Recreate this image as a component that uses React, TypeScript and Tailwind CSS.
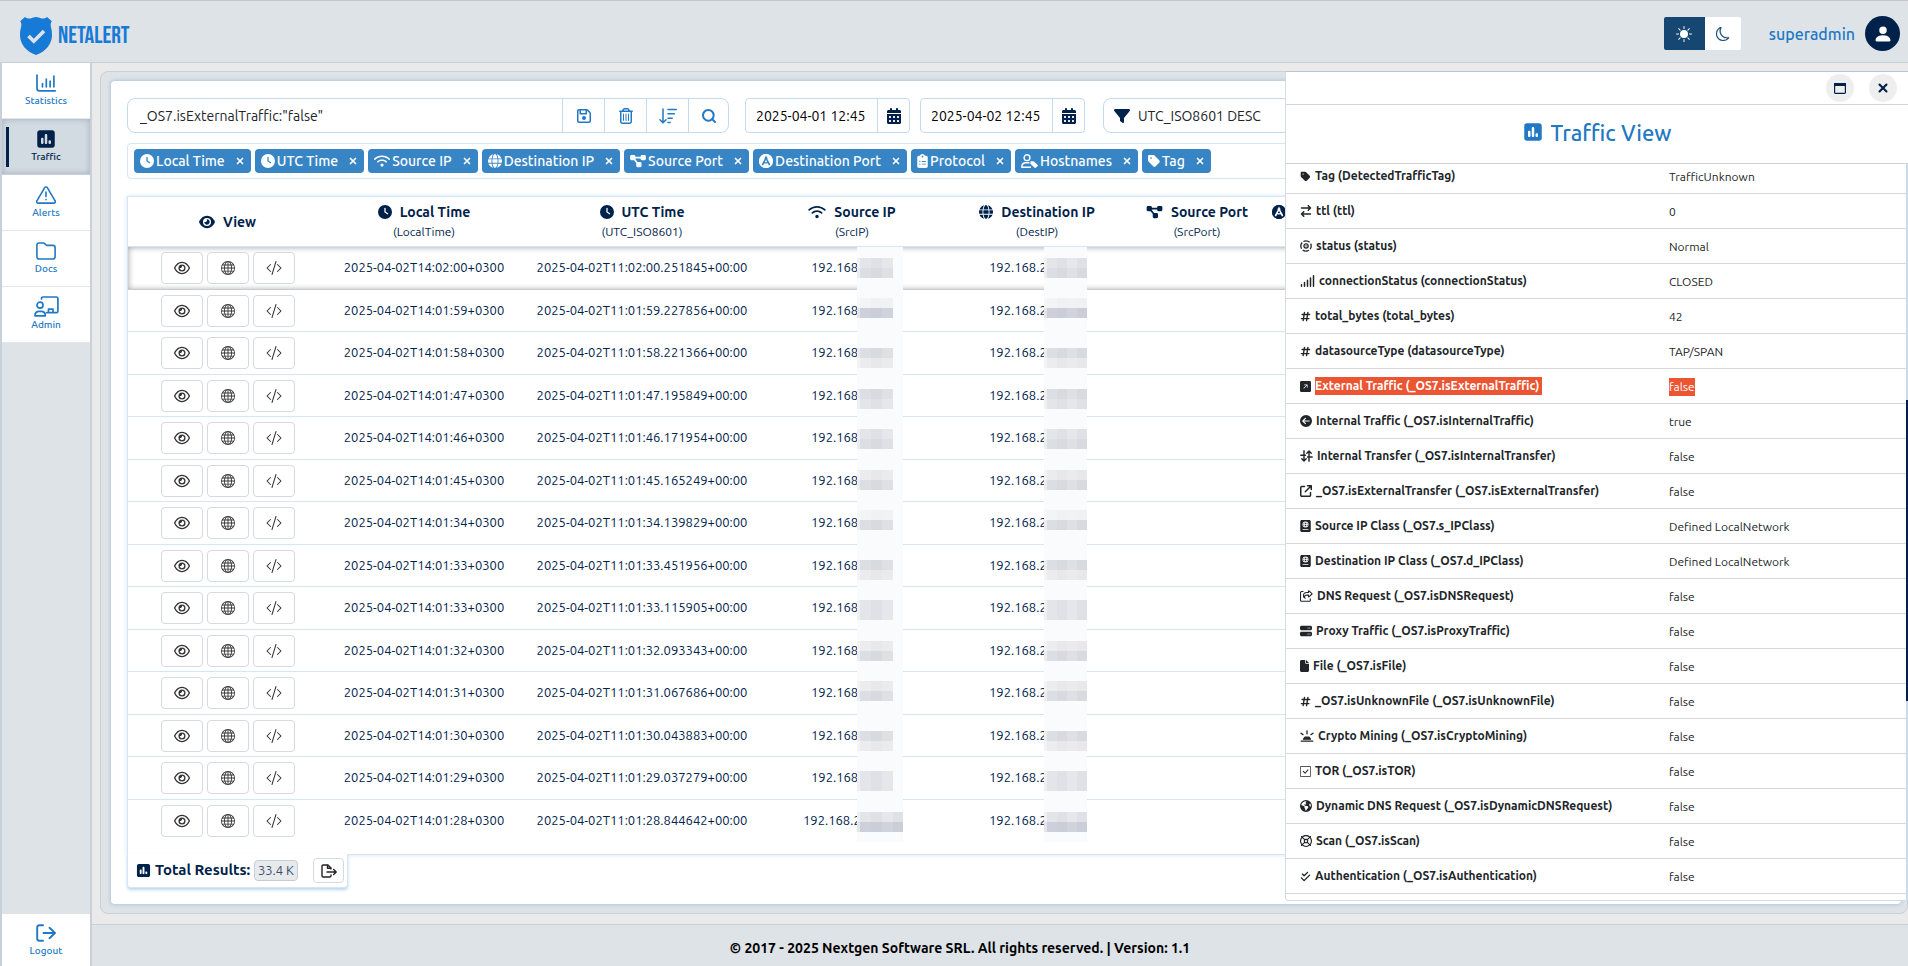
import type { ReactNode } from "react";
import { BsArrowUpRightSquareFill, BsCheckSquare, BsCodeSlash, BsGlobe, BsMoon, BsPersonFill, BsSunFill } from "react-icons/bs";
import {
  FaArrowRightArrowLeft, FaArrowUpRightFromSquare, FaCalendarDays, FaCheckDouble, FaCircleArrowLeft,
  FaClipboardList, FaClock, FaDiagramProject, FaEarthAmericas, FaEye, FaFile, FaFilter, FaGlobe, FaHashtag,
  FaPassport, FaRegEye, FaRegFloppyDisk, FaRegLifeRing, FaRegShareFromSquare, FaRegTrashCan, FaServer,
  FaSignal, FaSquarePollVertical, FaTag, FaWifi,
} from "react-icons/fa6";
import { Search, X } from "lucide-react";

const Line = ({ box, className, children, width = 1.8 }: { box: string; className: string; children: ReactNode; width?: number }) => (
  <svg viewBox={box} className={className} fill="none" stroke="currentColor" strokeWidth={width} strokeLinecap="round" strokeLinejoin="round" aria-hidden="true">
    {children}
  </svg>
);

const Shield = () => (
  <svg viewBox="0 0 32 38" className="h-[38px] w-8" aria-hidden="true">
    <path fill="#177ad6" d="M5 0C7 1.6 9.3 1.9 11.3 1.2 12.7.7 13.9.3 16 0c2.1.3 3.3.7 4.7 1.2C22.7 1.9 25 1.6 27 0l4.7 4c-1.5 2.6-1.2 4.9-.4 7.5.5 1.9.7 4 .7 7.5C31.6 27 26 34.5 16 38 6 34.5.4 27 0 19c0-3.5.2-5.6.7-7.5.8-2.6 1.1-4.9-.4-7.5Z" />
    <path fill="none" stroke="#dee3e7" strokeWidth="3.6" d="m8.5 19 5.3 5.2L24 14" />
  </svg>
);
const ChartIcon = () => (
  <Line box="0 0 20 18" className="h-[18px] w-5" width={1.7}>
    <path d="M1 1v13.5A2.3 2.3 0 0 0 3.3 16.8H19.2M6.5 9.5v3.3M10.3 5v7.8M14.1 7.2v5.6M17.9 2.2v10.6" />
  </Line>
);
const AlertIcon = () => (
  <Line box="0 0 20 18" className="h-[18px] w-5" width={1.6}>
    <path d="M8.7 1.7.9 14.8a1.5 1.5 0 0 0 1.3 2.3h15.6a1.5 1.5 0 0 0 1.3-2.3L11.3 1.7a1.5 1.5 0 0 0-2.6 0ZM10 6v4.6M10 13.5v.2" />
  </Line>
);
const FolderIcon = () => (
  <Line box="0 0 20 18" className="h-[18px] w-5" width={1.6}>
    <path d="M3 1h4.3c.6 0 1 .2 1.4.6l1.2 1.2c.4.4.8.6 1.4.6H17A2.1 2.1 0 0 1 19.1 5.5v9.4A2.1 2.1 0 0 1 17 17H3A2.1 2.1 0 0 1 .9 14.9V3.1A2.1 2.1 0 0 1 3 1Z" />
  </Line>
);
const AdminIcon = () => (
  <Line box="0 0 25 21" className="h-[21px] w-[25px]" width={1.7}>
    <circle cx="6" cy="9.2" r="3" />
    <path d="M1 19.8c0-3 1.8-4.5 4.2-4.5h1.9c2.4 0 4.2 1.5 4.2 4.5ZM7.5 3V2.4C7.5 1.6 8.1 1 8.9 1h13.5c.8 0 1.5.6 1.5 1.4v12.8c0 .8-.7 1.4-1.5 1.4H12.5M14.5 16.4v-3.2h4.5v3.2" />
  </Line>
);
const LogoutIcon = () => (
  <Line box="0 0 20 18" className="h-[18px] w-5" width={1.9}>
    <path d="M7 1.2H3.5A2.3 2.3 0 0 0 1.2 3.5v11a2.3 2.3 0 0 0 2.3 2.3H7M7.5 9h11.3M13.5 3.8 19 9l-5.5 5.2" />
  </Line>
);
const SortIcon = () => (
  <Line box="0 0 18 16" className="h-4 w-[18px]" width={1.5}>
    <path d="M4 1v13.5M1 11.7l3 3.1 3-3.1M9 1.5h8.3M9 5.8h6.3M9 10.2h4.2M9 14.5h2" />
  </Line>
);
const ExportIcon = () => (
  <Line box="0 0 16 14" className="h-[14px] w-4" width={1.4}>
    <path d="M10 5V4L7 1H2.2C1.5 1 1 1.5 1 2.2v9.6c0 .7.5 1.2 1.2 1.2h6.6c.7 0 1.2-.5 1.2-1.2v-.8M6.5 1v3.3H10M6 8h9M12.7 5.5 15.2 8l-2.5 2.5" />
  </Line>
);
const WindowIcon = () => (
  <svg viewBox="0 0 12 11" className="h-[11px] w-3" aria-hidden="true">
    <rect x=".6" y=".6" width="10.8" height="9.8" rx=".8" fill="none" stroke="currentColor" strokeWidth="1.2" />
    <path fill="currentColor" d="M0 0h12v3H0z" />
  </svg>
);
const CompassIcon = () => (
  <svg viewBox="0 0 16 16" className="size-[1em]" aria-hidden="true">
    <circle cx="8" cy="8" r="7.3" fill="none" stroke="currentColor" strokeWidth="1.4" />
    <path fill="currentColor" fillRule="evenodd" d="M8 0a8 8 0 1 1 0 16A8 8 0 0 1 8 0ZM7.4 2v1.3a1.7 1.7 0 0 0-.9 2.4L3 12l.3 1.8 1.5-1 1.3-2.3c1.2.4 2.6.4 3.8 0l1.3 2.3 1.5 1L13 12 9.5 5.7a1.7 1.7 0 0 0-.9-2.4V2Zm.6 4.6 1.3 2.5c-.8.3-1.8.3-2.6 0Z" />
  </svg>
);
const UserTagIcon = () => (
  <svg viewBox="0 0 17 14" className="h-[14px] w-[17px]" aria-hidden="true">
    <g fill="none" stroke="currentColor" strokeWidth="1.4" strokeLinejoin="round">
      <circle cx="6" cy="3.7" r="2.9" />
      <path d="M8.5 8.8H4.8C2.3 8.8.8 10.5.8 13.2H10" />
    </g>
    <path fill="currentColor" d="M9.5 7.3h3.2l4 3.6c.3.3.3.7 0 1l-2 1.9c-.3.3-.7.3-1 0l-4.2-3.9Z" />
  </svg>
);
const StatusIcon = () => (
  <Line box="0 0 12 12" className="size-3" width={1.3}>
    <circle cx="6" cy="6" r="5.2" strokeDasharray="6.6 1.568" strokeDashoffset="3.3" strokeLinecap="butt" />
    <circle cx="6" cy="6" r="2.1" />
    <path d="M6 6v.1" />
  </Line>
);
const TransferIcon = () => (
  <Line box="0 0 13 12" className="h-3 w-[13px]" width={1.4}>
    <path d="M4 .8v10M1.8 8.8 4 11l2.2-2.2M9 11.2v-10M6.8 3.2 9 1l2.2 2.2M.8 5.2h4.7M7.5 7h4.7" />
  </Line>
);
const MiningIcon = () => (
  <Line box="0 0 14 12" className="h-3 w-3.5" width={1.3}>
    <path d="M7 .8v3M1 3.2l2 1.4M13 3.2l-2 1.4M1.2 11.2h11.6" />
    <path fill="currentColor" d="M3.5 9.2 5 7.2h4l1.5 2Z" />
  </Line>
);

const NAV = [
  { label: "Statistics", icon: <ChartIcon /> },
  { label: "Traffic", icon: <FaSquarePollVertical className="size-5" />, active: true },
  { label: "Alerts", icon: <AlertIcon /> },
  { label: "Docs", icon: <FolderIcon /> },
  { label: "Admin", icon: <AdminIcon /> },
];

const CHIPS = [
  { label: "Local Time", icon: <FaClock /> },
  { label: "UTC Time", icon: <FaClock /> },
  { label: "Source IP", icon: <FaWifi className="w-4" /> },
  { label: "Destination IP", icon: <FaGlobe /> },
  { label: "Source Port", icon: <FaDiagramProject className="w-4" /> },
  { label: "Destination Port", icon: <CompassIcon /> },
  { label: "Protocol", icon: <FaClipboardList className="w-[11px]" /> },
  { label: "Hostnames", icon: <UserTagIcon /> },
  { label: "Tag", icon: <FaTag className="w-3" /> },
];

const COLUMNS = [
  { label: "Local Time", field: "LocalTime", icon: <FaClock />, width: "w-[194px]" },
  { label: "UTC Time", field: "UTC_ISO8601", icon: <FaClock />, width: "w-[242px]" },
  { label: "Source IP", field: "SrcIP", icon: <FaWifi className="w-[18px]" />, width: "w-[178px]" },
  { label: "Destination IP", field: "DestIP", icon: <FaGlobe />, width: "w-[192px]" },
  { label: "Source Port", field: "SrcPort", icon: <FaDiagramProject className="w-[17px]" />, width: "w-[128px]" },
  { label: "Destination Port", field: "DestPort", icon: <CompassIcon />, width: "w-[154px]" },
];

type Row = { local: string; utc: string; src: string; off: number; a: string[]; b: string[] };
const LIGHT = ["#ececef", "#e8e8ea", "#ebebed"];
const PALE = ["#f3f4f6", "#f0f1f3", "#f2f2f4"];
const DARK = ["#cdd0da", "#cbced8", "#d0d3dc"];
const MID = ["#dbdfe4", "#d8dae0", "#dfe0e4"];
const SOFT = ["#e3e5e9", "#e0e1e6", "#e6e7ea"];
const ROWS: Row[] = [
  { local: "14:02:00", utc: "11:02:00.251845", src: "192.168", off: 11, a: SOFT, b: MID },
  { local: "14:01:59", utc: "11:01:59.227856", src: "192.168", off: 8, a: PALE, b: DARK },
  { local: "14:01:58", utc: "11:01:58.221366", src: "192.168", off: 16, a: MID, b: LIGHT },
  { local: "14:01:47", utc: "11:01:47.195849", src: "192.168", off: 14, a: MID, b: SOFT },
  { local: "14:01:46", utc: "11:01:46.171954", src: "192.168", off: 12, a: SOFT, b: MID },
  { local: "14:01:45", utc: "11:01:45.165249", src: "192.168", off: 10, a: LIGHT, b: MID },
  { local: "14:01:34", utc: "11:01:34.139829", src: "192.168", off: 8, a: PALE, b: MID },
  { local: "14:01:33", utc: "11:01:33.451956", src: "192.168", off: 15, a: MID, b: LIGHT },
  { local: "14:01:33", utc: "11:01:33.115905", src: "192.168", off: 13, a: SOFT, b: SOFT },
  { local: "14:01:32", utc: "11:01:32.093343", src: "192.168", off: 11, a: LIGHT, b: MID },
  { local: "14:01:31", utc: "11:01:31.067686", src: "192.168", off: 9, a: LIGHT, b: MID },
  { local: "14:01:30", utc: "11:01:30.043883", src: "192.168", off: 16, a: MID, b: LIGHT },
  { local: "14:01:29", utc: "11:01:29.037279", src: "192.168", off: 14, a: SOFT, b: SOFT },
  { local: "14:01:28", utc: "11:01:28.844642", src: "192.168.2", off: 12, a: SOFT, b: DARK },
];

const Band = ({ shades, wide }: { shades: string[]; wide: boolean }) => (
  <span className="flex h-[10px]">
    <span className="w-[3px] opacity-50" style={{ backgroundColor: shades[0] }} />
    {shades.map((c) => (
      <span key={c} className="w-[10px] grow" style={{ backgroundColor: c }} />
    ))}
    <span className="w-[10px]" style={{ backgroundColor: wide ? shades[1] : "#f9fbfd" }} />
  </span>
);
const Mosaic = ({ row, wide, className }: { row: Row; wide: boolean; className: string }) => (
  <span className={`absolute -bottom-px top-0 z-10 bg-[#fafbfc] ${className}`} style={{ paddingTop: row.off }} aria-hidden="true">
    <Band shades={row.a} wide={wide} />
    <Band shades={row.b} wide={wide} />
  </span>
);

const DETAILS: { label: string; value: string; icon: ReactNode; hit?: boolean }[] = [
  { label: "Tag (DetectedTrafficTag)", value: "TrafficUnknown", icon: <FaTag className="size-[11px]" /> },
  { label: "ttl (ttl)", value: "0", icon: <FaArrowRightArrowLeft className="size-3" /> },
  { label: "status (status)", value: "Normal", icon: <StatusIcon /> },
  { label: "connectionStatus (connectionStatus)", value: "CLOSED", icon: <FaSignal className="h-3 w-[15px]" /> },
  { label: "total_bytes (total_bytes)", value: "42", icon: <FaHashtag className="size-[11px]" /> },
  { label: "datasourceType (datasourceType)", value: "TAP/SPAN", icon: <FaHashtag className="size-[11px]" /> },
  { label: "External Traffic (_OS7.isExternalTraffic)", value: "false", icon: <BsArrowUpRightSquareFill className="size-[11px]" />, hit: true },
  { label: "Internal Traffic (_OS7.isInternalTraffic)", value: "true", icon: <FaCircleArrowLeft className="size-3" /> },
  { label: "Internal Transfer (_OS7.isInternalTransfer)", value: "false", icon: <TransferIcon /> },
  { label: "_OS7.isExternalTransfer (_OS7.isExternalTransfer)", value: "false", icon: <FaArrowUpRightFromSquare className="size-3" /> },
  { label: "Source IP Class (_OS7.s_IPClass)", value: "Defined LocalNetwork", icon: <FaPassport className="h-3 w-[11px]" /> },
  { label: "Destination IP Class (_OS7.d_IPClass)", value: "Defined LocalNetwork", icon: <FaPassport className="h-3 w-[11px]" /> },
  { label: "DNS Request (_OS7.isDNSRequest)", value: "false", icon: <FaRegShareFromSquare className="h-3 w-[13px]" /> },
  { label: "Proxy Traffic (_OS7.isProxyTraffic)", value: "false", icon: <FaServer className="size-3" /> },
  { label: "File (_OS7.isFile)", value: "false", icon: <FaFile className="h-3 w-[9px]" /> },
  { label: "_OS7.isUnknownFile (_OS7.isUnknownFile)", value: "false", icon: <FaHashtag className="size-[11px]" /> },
  { label: "Crypto Mining (_OS7.isCryptoMining)", value: "false", icon: <MiningIcon /> },
  { label: "TOR (_OS7.isTOR)", value: "false", icon: <BsCheckSquare className="size-[11px]" /> },
  { label: "Dynamic DNS Request (_OS7.isDynamicDNSRequest)", value: "false", icon: <FaEarthAmericas className="size-3" /> },
  { label: "Scan (_OS7.isScan)", value: "false", icon: <FaRegLifeRing className="size-3" /> },
  { label: "Authentication (_OS7.isAuthentication)", value: "false", icon: <FaCheckDouble className="size-[11px]" /> },
];

function Header() {
  return (
    <header className="flex h-[63px] shrink-0 items-center justify-between border-y border-b-[#c8d1d8] border-t-[#c6c6c6] bg-[#dee3e7] pl-5 pr-2">
      <a href="#home" className="flex items-center gap-1.5 pt-2">
        <Shield />
        <span className="font-['Bebas_Neue','Roboto_Condensed',sans-serif] text-2xl leading-none text-[#177ad6]">NETALERT</span>
      </a>
      <div className="flex items-center pt-1">
        <div className="flex h-[33px] overflow-hidden rounded-xs">
          <button aria-label="Light theme" className="flex w-[41px] items-center justify-center bg-[#164773] text-white">
            <BsSunFill className="size-4" />
          </button>
          <button aria-label="Dark theme" className="flex w-9 items-center justify-center bg-white text-[#164773]">
            <BsMoon className="size-3.5" strokeWidth={0.4} />
          </button>
        </div>
        <a href="#account" className="ml-7 flex items-center gap-2.5 text-base font-medium text-[#2178c4]">
          superadmin
          <span className="flex size-[35px] items-center justify-center rounded-full bg-[#00224a] text-white">
            <BsPersonFill className="size-5" />
          </span>
        </a>
      </div>
    </header>
  );
}

function Sidebar() {
  return (
    <aside className="flex w-[92px] shrink-0 flex-col justify-between border-x-2 border-[#c8d1d8] bg-[#dee3e7]">
      <nav>
        {NAV.map((n) => (
          <a
            key={n.label}
            href={`#${n.label.toLowerCase()}`}
            className={
              n.active
                ? "flex h-14 items-center border-b border-[#c8d1d8] bg-[#d3dbe2] pl-1 text-[#00224a] shadow-[inset_0_0_6px_rgba(0,34,74,0.25)]"
                : "flex h-14 items-center border-b border-[#e2e7ea] bg-white pl-1 text-[#2178c4]"
            }
          >
            <span className={n.active ? "h-10 w-[3px] bg-[#00224a]" : "w-[3px]"} />
            <span className="flex grow flex-col items-center gap-0.5 pb-0.5 pr-[7px] text-[10px] font-medium leading-3">
              <span className="flex h-5 items-center">{n.icon}</span>
              {n.label}
            </span>
          </a>
        ))}
      </nav>
      <a href="#logout" className="flex h-[52px] flex-col items-center justify-center gap-0.5 bg-white text-[10px] font-medium leading-3 text-[#2178c4]">
        <span className="flex h-5 items-center"><LogoutIcon /></span>
        Logout
      </a>
    </aside>
  );
}

function Toolbar() {
  const tool = "flex w-[42px] items-center justify-center border-l border-[#c3daee]";
  const dateBox = "flex w-[165px] rounded border border-[#c3daee]";
  return (
    <div className="flex h-[35px]">
      <div className="flex w-[602px] rounded-lg border border-[#c3daee] text-[#2178c4]">
        <input aria-label="Query" defaultValue={'_OS7.isExternalTraffic:"false"'} className="min-w-0 grow bg-transparent px-3 text-sm text-[#212529] outline-none" />
        <button aria-label="Save query" className={tool}><FaRegFloppyDisk className="size-4" /></button>
        <button aria-label="Clear query" className={tool}><FaRegTrashCan className="size-4" /></button>
        <button aria-label="Sort" className={tool}><SortIcon /></button>
        <button aria-label="Search" className="flex w-10 items-center justify-center border-l border-[#c3daee]"><Search className="size-4" strokeWidth={3} /></button>
      </div>
      <div className={`ml-4 ${dateBox}`}>
        <input aria-label="From date" defaultValue="2025-04-01 12:45" className="w-[131px] bg-transparent pl-2.5 text-sm text-black outline-none" />
        <button aria-label="Pick start" className="flex grow items-center justify-center border-l border-[#c3daee] text-[#00224a]"><FaCalendarDays className="size-4" /></button>
      </div>
      <div className={`ml-2.5 ${dateBox}`}>
        <input aria-label="To date" defaultValue="2025-04-02 12:45" className="w-[131px] bg-transparent pl-2.5 text-sm text-black outline-none" />
        <button aria-label="Pick end" className="flex grow items-center justify-center border-l border-[#c3daee] text-[#00224a]"><FaCalendarDays className="size-4" /></button>
      </div>
      <label className="ml-[18px] flex grow items-center gap-2 rounded-lg border border-[#c3daee] pl-2.5">
        <FaFilter className="size-4 text-[#00224a]" />
        <select aria-label="Order" className="grow appearance-none bg-transparent text-sm text-[#212529] outline-none">
          <option>UTC_ISO8601 DESC</option>
        </select>
      </label>
    </div>
  );
}

function Results() {
  const act = "flex h-8 w-[42px] items-center justify-center rounded border border-[#d5d9e2] bg-white text-[#333]";
  return (
    <div>
      <div className="h-[659px] overflow-hidden border border-[#d7e6f4] shadow-[0_0_4px_rgba(120,175,225,0.35)]">
        <table className="w-full table-fixed border-separate border-spacing-0 text-[13px] text-[#00224a]">
          <thead>
            <tr className="h-[50px]">
              <th scope="col" className="w-[199px] border-b border-[#d7e6f4] p-0 text-sm font-bold">
                <span className="flex items-center justify-center gap-2"><FaEye className="size-4" />View</span>
              </th>
              {COLUMNS.map((c) => (
                <th key={c.field} scope="col" className={`${c.width} whitespace-nowrap border-b border-[#d7e6f4] p-0 font-normal`}>
                  <span className="flex items-center justify-center gap-2 text-sm font-bold leading-5">{c.icon}{c.label}</span>
                  <span className="block text-xs leading-5">({c.field})</span>
                </th>
              ))}
              <th className="border-b border-[#d7e6f4]" aria-hidden="true" />
            </tr>
          </thead>
          <tbody className="[&>tr:first-child>td]:border-[#c5ccd8] [&>tr:last-child>td]:border-transparent [&_td]:border-b [&_td]:border-[#d7e6f4] [&_td]:p-0">
            {ROWS.map((r, i) => (
              <tr
                key={r.utc}
                className={`odd:h-[43px] even:h-[42px] ${i === 0 ? "shadow-[inset_0_0_6px_rgba(0,0,0,0.4)]" : ""}`}
              >
                <td>
                  <span className="flex justify-center gap-1">
                    <button aria-label="View row" className={act}><FaRegEye className="size-4" /></button>
                    <button aria-label="Locate row" className={act}><BsGlobe className="size-3.5" /></button>
                    <button aria-label="Raw row" className={act}><BsCodeSlash className="size-4" /></button>
                  </span>
                </td>
                <td className="text-center">2025-04-02T{r.local}+0300</td>
                <td className="text-center">2025-04-02T{r.utc}+00:00</td>
                <td className="relative">
                  <span className={i === ROWS.length - 1 ? "pl-10" : "pl-12"}>{r.src}</span>
                  <Mosaic row={r} wide={i === ROWS.length - 1} className="left-[94px] w-[46px]" />
                </td>
                <td className="relative">
                  <span className="pl-12">192.168.2</span>
                  <Mosaic row={r} wide className="left-[103px] w-[43px]" />
                </td>
                <td />
                <td />
                <td />
              </tr>
            ))}
          </tbody>
        </table>
      </div>
      <div className="relative -mt-px flex h-[34px] w-[221px] items-center rounded-b border border-t-0 border-[#d7e6f4] bg-white pl-2 pr-[3px] text-[#00224a] shadow-[0_2px_3px_rgba(120,175,225,0.5)]">
        <FaSquarePollVertical className="mr-1 size-[15px] shrink-0" />
        <span className="grow whitespace-nowrap text-[15px] font-bold">Total Results:</span>
        <span className="mr-[15px] whitespace-nowrap rounded border border-[#c9cdd2] bg-[#e7eaed] px-[3px] text-[13px] leading-[19px] text-[#3c4d63]">33.4 K</span>
        <button aria-label="Export results" className="flex h-[25px] w-[31px] shrink-0 items-center justify-center rounded border border-[#d5d9e2] text-[#222]"><ExportIcon /></button>
      </div>
    </div>
  );
}

function TrafficPanel() {
  const round = "flex size-7 items-center justify-center rounded-full bg-[#eeeeee] text-[#00224a]";
  return (
    <section className="absolute bottom-[65px] right-0 top-[71px] z-20 flex w-[623px] flex-col overflow-hidden rounded-bl border border-r-0 border-[#d5dbe1] border-t-[#b9c6d1] bg-white">
      <div className="flex h-[33px] shrink-0 items-center justify-end gap-[15px] border-b border-[#cfd6dc] pr-[11px]">
        <button aria-label="Maximize" className={round}><WindowIcon /></button>
        <button aria-label="Close" className={round}><X className="size-3.5" strokeWidth={3.5} /></button>
      </div>
      <h2 className="flex h-[59px] shrink-0 items-center justify-center gap-2 border-b border-[#cfd3d6] pb-1 text-[22px] font-medium text-[#2178c4]">
        <FaSquarePollVertical className="size-5" />
        Traffic View
      </h2>
      <div className="flex min-h-0 grow">
        <div className="min-w-0 grow overflow-hidden">
          <table className="-mt-[5px] w-full table-fixed border-separate border-spacing-0 text-xs text-[#212529]">
            <tbody>
              {DETAILS.map((d) => (
                <tr key={d.label} className="h-[35px]">
                  <th scope="row" className="w-[369px] border-b border-[#d6d8da] p-0 pl-3.5 text-left font-bold">
                    <span className="flex items-center gap-1">
                      {d.icon}
                      <span className={d.hit ? "bg-[#eb5532] pr-[3px] leading-[18px] text-white" : "leading-[18px]"}>{d.label}</span>
                    </span>
                  </th>
                  <td className="border-b border-[#d6d8da] p-0 pl-3.5 pt-0.5">
                    <span className={d.hit ? "inline-block bg-[#eb5532] leading-[18px] text-white" : "inline-block leading-[18px]"}>{d.value}</span>
                  </td>
                </tr>
              ))}
            </tbody>
          </table>
        </div>
        <div className="flex w-0.5 shrink-0 flex-col bg-[#c8dcee]" aria-hidden="true">
          <div className="h-[32%]" />
          <div className="h-[41%] bg-[#00224a]" />
        </div>
      </div>
    </section>
  );
}

export default function App() {
  return (
    <div className="relative flex h-screen flex-col overflow-hidden bg-[#eaeaea] font-['Ubuntu','Noto_Sans',sans-serif]">
      <Header />
      <div className="flex min-h-0 grow">
        <Sidebar />
        <div className="flex min-w-0 grow flex-col">
          <main className="min-h-0 grow pb-2.5 pl-2 pt-2">
            <div className="h-full rounded-lg border border-[#c8d1d8] bg-[#dee3e7] py-[9px] pl-2.5 pr-1.5">
              <div className="h-full rounded bg-white px-4 pt-[17px] shadow-[0_0_4px_rgba(70,130,180,0.45)]">
                <Toolbar />
                <div className="mb-[17px] mt-2.5 flex h-9 items-center gap-1 rounded border border-[#d7e6f4] px-1.5">
                  {CHIPS.map((c) => (
                    <span key={c.label} className="flex h-6 items-center gap-0.5 rounded bg-[#3885c6] px-1.5 text-sm font-medium text-white">
                      {c.icon}
                      {c.label}
                      <button aria-label={`Remove ${c.label}`} className="ml-2"><X className="size-2.5" strokeWidth={4} /></button>
                    </span>
                  ))}
                </div>
                <Results />
              </div>
            </div>
          </main>
          <footer className="flex h-[42px] shrink-0 items-center justify-center border-t border-[#c8d1d8] bg-[#dee3e7] pr-20 pt-1 text-sm font-bold text-black">
            © 2017 - 2025 Nextgen Software SRL. All rights reserved. | Version: 1.1
          </footer>
        </div>
      </div>
      <TrafficPanel />
    </div>
  );
}
